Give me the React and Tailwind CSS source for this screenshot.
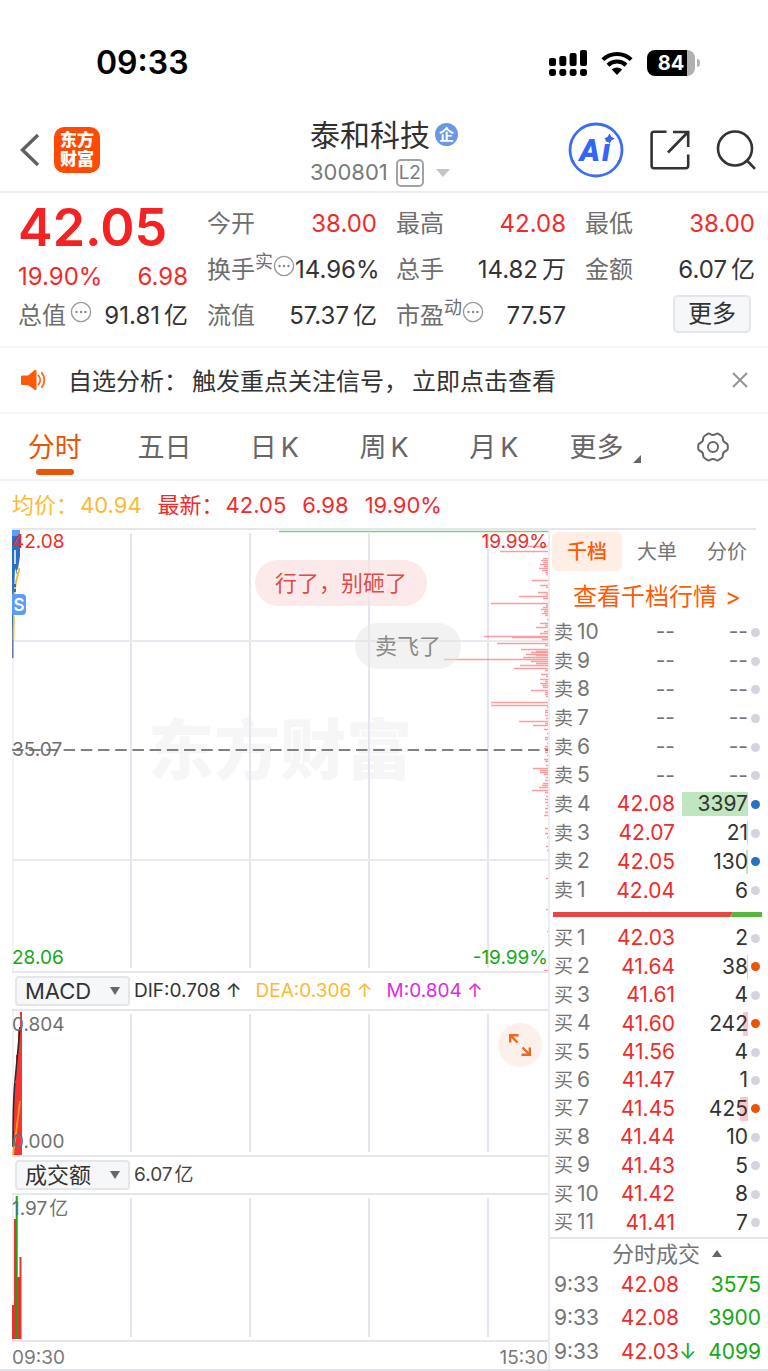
import React from "react";

const SELLS = [
  ["10", null, null, 0, "idle"],
  ["9", null, null, 0, "idle"],
  ["8", null, null, 0, "idle"],
  ["7", null, null, 0, "idle"],
  ["6", null, null, 0, "idle"],
  ["5", null, null, 0, "idle"],
  ["4", "42.08", "3397", 66, "sell"],
  ["3", "42.07", "21", 1, "idle"],
  ["2", "42.05", "130", 2, "sell"],
  ["1", "42.04", "6", 0, "idle"],
];

const BUYS = [
  ["1", "42.03", "2", 0, "idle"],
  ["2", "41.64", "38", 1, "buy"],
  ["3", "41.61", "4", 0, "idle"],
  ["4", "41.60", "242", 5, "buy"],
  ["5", "41.56", "4", 0, "idle"],
  ["6", "41.47", "1", 0, "idle"],
  ["7", "41.45", "425", 8, "buy"],
  ["8", "41.44", "10", 0, "idle"],
  ["9", "41.43", "5", 0, "idle"],
  ["10", "41.42", "8", 0, "idle"],
  ["11", "41.41", "7", 0, "idle"],
];

const TRADES = [
  ["9:33", "42.08", "", "3575"],
  ["9:33", "42.08", "", "3900"],
  ["9:33", "42.03", "↓", "4099"],
];

// Order density along the right edge of the price chart: [y, length].
const DENSITY = [
  [18, 20], [23, 48], [30, 5], [32, 7], [34, 5], [36, 8], [38, 4], [40, 9], [42, 6], [44, 3], [46, 2],
  [52, 16], [57, 8], [59, 2], [64, 10], [66, 2], [68, 29], [70, 5], [75, 57], [77, 2], [79, 5], [81, 7],
  [83, 4], [85, 6], [87, 3], [91, 1], [95, 8], [97, 3], [99, 12], [103, 4], [105, 8], [108, 64], [109, 36],
  [111, 6], [115, 51], [117, 3], [121, 27], [123, 12], [124, 17], [126, 22], [127, 12], [129, 25], [131, 104],
  [133, 17], [135, 12], [137, 28], [140, 34], [142, 3], [146, 7], [148, 2], [151, 8], [153, 3], [155, 8],
  [157, 6], [159, 5], [162, 17], [164, 3], [166, 3], [168, 2], [174, 57], [177, 57], [179, 1], [182, 3],
  [184, 3], [187, 3], [190, 2], [193, 29], [195, 3], [197, 15], [201, 4], [205, 1], [209, 3], [211, 3],
  [215, 1], [218, 3], [220, 4], [222, 3], [224, 3], [227, 1], [231, 4], [233, 3], [237, 2], [240, 15],
  [242, 8], [244, 8], [246, 4], [249, 2], [252, 3], [255, 5], [257, 6], [259, 9], [262, 16], [264, 3],
  [268, 2], [271, 3], [274, 3], [277, 1], [280, 3], [284, 3], [287, 4], [300, 3], [305, 3], [309, 1],
  [318, 2], [322, 1], [350, 2], [381, 2], [403, 1], [442, 4],
];

const DOT = { idle: "bg-[#d2d5dc]", sell: "bg-[#2a70c4]", buy: "bg-[#ea5504]" };

function More() {
  return (
    <svg viewBox="0 0 22 22" className="size-[22px] shrink-0" aria-hidden="true">
      <circle cx="11" cy="11" r="9.6" fill="none" stroke="#9a9a9a" strokeWidth="1.4" />
      <circle cx="6.5" cy="11" r="1.2" fill="#888" />
      <circle cx="11" cy="11" r="1.2" fill="#888" />
      <circle cx="15.5" cy="11" r="1.2" fill="#888" />
    </svg>
  );
}

function StatusBar() {
  return (
    <div className="flex h-[108px] items-center justify-between pt-[17px] pr-[68px] pl-24">
      <span className="text-[32px] leading-10 font-semibold text-black">09:33</span>
      <div className="flex items-center gap-3.5">
        <svg viewBox="0 0 38 26" className="h-[26px] w-[38px]" role="img" aria-label="信号">
          <g fill="#000">
            <rect x="0" y="8" width="7" height="8" rx="2" />
            <rect x="10.3" y="6" width="7" height="10" rx="2" />
            <rect x="20.6" y="3" width="7" height="13" rx="2" />
            <rect x="31" y="0" width="7" height="16" rx="2" />
            <rect x="0" y="19" width="7" height="7" rx="2.4" />
            <rect x="10.3" y="19" width="7" height="7" rx="2.4" />
            <rect x="20.6" y="19" width="7" height="7" rx="2.4" />
            <rect x="31" y="19" width="7" height="7" rx="2.4" />
          </g>
        </svg>
        <svg viewBox="0 0 32 24" className="h-6 w-8" role="img" aria-label="无线网络">
          <path d="M1.8 8.6a20.5 20.5 0 0 1 28.4 0" fill="none" stroke="#000" strokeWidth="4" />
          <path d="M7 14.2a13 13 0 0 1 18 0" fill="none" stroke="#000" strokeWidth="4" />
          <path d="M16 24l-5.2-5.4a7.6 7.6 0 0 1 10.4 0z" fill="#000" />
        </svg>
        <div className="flex items-center gap-0.5">
          <div className="flex h-[26px] w-12 items-center justify-center rounded-lg bg-linear-to-r from-black from-84% to-[#b0b0b0] to-84% text-xl font-bold text-white">
            84
          </div>
          <div className="h-2 w-[3px] rounded-r-full bg-[#b5b5b5]" />
        </div>
      </div>
    </div>
  );
}

function Header() {
  return (
    <header className="grid h-[85px] grid-cols-[1fr_auto_1fr] items-center border-b-2 border-[#ececee]">
      <div className="flex items-center gap-3.5 pl-5">
        <button aria-label="返回">
          <svg viewBox="0 0 20 34" className="h-[34px] w-5">
            <path d="M18 2L2.500 17L18 32" fill="none" stroke="#606060" strokeWidth="3.4" />
          </svg>
        </button>
        <div className="grid size-[46px] place-content-center rounded-[10px] bg-[#ff4a04] text-center text-[17px] leading-[19px] font-black text-white">
          <span>东方</span>
          <span>财富</span>
        </div>
      </div>
      <div className="flex flex-col self-end">
        <h1 className="flex h-[39px] items-center gap-[5px] text-[30px] leading-10 text-[#303030]">
          泰和科技
          <span className="grid size-[23px] place-content-center rounded-full bg-[#6c96e8] text-[15px] leading-none font-bold text-white">
            企
          </span>
        </h1>
        <button className="flex h-[37px] items-center gap-2 text-[22px] text-[#7a7a7a]">
          300801
          <span className="grid h-7 w-7 place-content-center rounded-[5px] border-2 border-[#a3a3a3] text-[19px] leading-none">
            L2
          </span>
          <svg viewBox="0 0 14 8" className="ml-1 h-2 w-3.5">
            <path d="M0 0H14L7 8z" fill="#c4c4c4" />
          </svg>
        </button>
      </div>
      <div className="flex items-center justify-end gap-[26px] pr-3">
        <button aria-label="Ai">
          <svg viewBox="0 0 56 56" className="size-14">
            <circle cx="28" cy="28" r="26" fill="none" stroke="#3a6cf8" strokeWidth="2.8" />
            <text x="11.500" y="38.500" fill="#3565f6" fontSize="31" fontWeight="900" fontStyle="italic" fontFamily="Roboto, sans-serif">
              A<tspan dx="2">i</tspan>
            </text>
            <path d="M41.500 11.500l1.900 3.300 3.300 1.900-3.300 1.900-1.900 3.300-1.900-3.300-3.300-1.900 3.300-1.900z" fill="#3565f6" />
          </svg>
        </button>
        <button aria-label="分享">
          <svg viewBox="0 0 40 40" className="size-10" fill="none" stroke="#333" strokeWidth="2.6">
            <path d="M16.5 1.8H4a2.4 2.4 0 0 0-2.4 2.4V36A2.4 2.4 0 0 0 4 38.200H35.800A2.400 2.400 0 0 0 38.200 36V24.500" />
            <path d="M23 2H38.200V17M38 2L18 22.500" />
          </svg>
        </button>
        <button aria-label="搜索">
          <svg viewBox="0 0 40 40" className="size-10" fill="none" stroke="#333" strokeWidth="2.600">
            <circle cx="19" cy="18.500" r="17" />
            <path d="M31 30.500L39 38.800" />
          </svg>
        </button>
      </div>
    </header>
  );
}

function Stat({ label, sup, more, value, unit, red }) {
  return (
    <div className="flex h-[46px] items-center justify-between whitespace-nowrap">
      <span className="flex items-center text-[#6e6e6e]">
        {label}
        {sup && <span className="-mt-4 text-lg leading-6">{sup}</span>}
        {more && (
          <span className="-mt-2">
            <More />
          </span>
        )}
      </span>
      <span className={red ? "text-[#f12b2b]" : "text-[#333]"}>
        {value}
        {unit && <span className="ml-1">{unit}</span>}
      </span>
    </div>
  );
}

function Quote() {
  return (
    <section className="grid grid-cols-4 gap-x-[19px] border-b-2 border-[#f5f5f7] pt-2 pr-[13px] pb-[7px] pl-[18px] text-2xl leading-8">
      <div>
        <div className="h-[54px] text-[52px] leading-[54px] font-semibold text-[#f42222]">42.05</div>
        <div className="flex h-[43px] items-center justify-between text-[#f12b2b]">
          <span>19.90%</span>
          <span>6.98</span>
        </div>
        <div className="flex h-9 items-center justify-between whitespace-nowrap">
          <span className="flex items-center gap-1 text-[#6e6e6e]">
            总值
            <span className="-mt-2">
              <More />
            </span>
          </span>
          <span className="text-[#333]">
            91.81<span className="ml-1">亿</span>
          </span>
        </div>
      </div>
      <div>
        <Stat label="今开" value="38.00" red />
        <Stat label="换手" sup="实" more value="14.96%" />
        <Stat label="流值" value="57.37" unit="亿" />
      </div>
      <div>
        <Stat label="最高" value="42.08" red />
        <Stat label="总手" value="14.82" unit="万" />
        <Stat label="市盈" sup="动" more value="77.57" />
      </div>
      <div>
        <Stat label="最低" value="38.00" red />
        <Stat label="金额" value="6.07" unit="亿" />
        <div className="flex justify-end pt-[2px] pr-1">
          <button className="h-[38px] w-[78px] rounded-[5px] border-2 border-[#e5e6ea] bg-[#f6f7f9] leading-none text-[#333]">
            更多
          </button>
        </div>
      </div>
    </section>
  );
}

function Notice() {
  return (
    <div className="flex h-[66px] items-center border-b-2 border-[#f5f5f7] pr-5 pl-[21px] text-2xl text-[#333]">
      <svg viewBox="0 0 26 22" className="mr-[21px] h-[22px] w-[26px]" aria-hidden="true">
        <path d="M1 6.500H7L13.500 1.300Q15.500 0 15.500 2.500V19.500Q15.500 22 13.500 20.700L7 16H1Q0 16 0 15V7.500Q0 6.500 1 6.500z" fill="#ff5a05" />
        <path d="M17.500 6.500a7 7 0 0 1 0 9M20.800 3.800a11.500 11.500 0 0 1 0 14.400" fill="none" stroke="#ff6a20" strokeWidth="1.900" strokeLinecap="round" />
      </svg>
      <a href="#signals" className="flex flex-1 gap-1 pt-1">
        <span>自选分析：</span>
        <span>触发重点关注信号，</span>
        <span>立即点击查看</span>
      </a>
      <button aria-label="关闭">
        <svg viewBox="0 0 16 16" className="size-4">
          <path d="M1 1L15 15M15 1L1 15" stroke="#949494" strokeWidth="2" />
        </svg>
      </button>
    </div>
  );
}

function Periods() {
  const item = "flex items-center justify-center pt-1 text-[#666]";
  return (
    <nav className="grid h-[67px] grid-cols-7 border-b-2 border-[#f3f3f5] text-[27px]">
      <button className="relative flex items-center justify-center pt-1 text-[#ea5504]">
        分时
        <span className="absolute bottom-1 h-1.5 w-[38px] rounded-full bg-[#ea5504]" />
      </button>
      <button className={item}>五日</button>
      {["日", "周", "月"].map((p) => (
        <button key={p} className="flex items-center justify-center gap-1 pt-1 text-[#666]">
          <span>{p}</span>
          <span>K</span>
        </button>
      ))}
      <button className="flex items-center justify-center gap-2.5 pt-1 pl-1 text-[#666]">
        更多
        <svg viewBox="0 0 8 8" className="mt-5 size-2">
          <path d="M8 0V8H0z" fill="#666" />
        </svg>
      </button>
      <button className="flex items-center justify-center" aria-label="设置">
        <svg viewBox="0 0 32 30" className="h-[30px] w-8" fill="none" stroke="#666" strokeWidth="2">
          <path
            strokeLinejoin="round"
            d="M10.200 2.200Q11.500 1 13 2Q16 4 19 2Q20.500 1 21.800 2.200L24.600 4Q26 5 25.800 6.800Q25.800 9.800 28.800 11Q30.800 12 30.800 13.500V16.500Q30.800 18 28.800 19Q25.800 20.200 25.800 23.200Q26 25 24.600 26L21.800 27.800Q20.500 29 19 28Q16 26 13 28Q11.500 29 10.200 27.800L7.400 26Q6 25 6.200 23.200Q6.200 20.200 3.200 19Q1.200 18 1.200 16.500V13.500Q1.200 12 3.200 11Q6.200 9.800 6.200 6.800Q6 5 7.400 4z"
          />
          <circle cx="16" cy="15" r="5" />
        </svg>
      </button>
    </nav>
  );
}

function Grid({ height }) {
  return (
    <g stroke="#e4e5ee" strokeWidth="2">
      <path d={`M1 0V${height}`} strokeWidth="1" />
      <path d={`M119 3V${height - 3}M238 3V${height - 3}M357 3V${height - 3}M476 3V${height - 3}`} />
    </g>
  );
}

function PriceChart() {
  return (
    <div className="relative border-y-2 border-[#e6e7ec] text-[19px] leading-6">
      <span className="absolute inset-x-0 top-[184px] text-center text-[66px] leading-[72px] font-black text-[#f6f6f6]">
        东方财富
      </span>
      <svg viewBox="0 0 536 441" preserveAspectRatio="none" className="relative block h-[441px] w-full" role="img" aria-label="分时走势">
        <Grid height={441} />
        <path d="M0 111H536M0 330H536" stroke="#e8e9f1" strokeWidth="2" />
        <path d="M267 1.500H536" stroke="#7fce80" strokeWidth="1.500" />
        <path d="M0 220H536" stroke="#808080" strokeWidth="2" strokeDasharray="11.500 5.700" />
        <path
          d={DENSITY.map(([y, w]) => `M536 ${y - 1.5}h${-w}`).join("")}
          stroke="#fb5a5f"
          strokeOpacity=".6"
          strokeWidth="1.300"
        />
        <path d="M.800 128V1H6" fill="none" stroke="#5b7f9e" strokeWidth="1.500" />
        <path d="M0 0H8V26L5 45L3 38L1.500 78L0 100z" fill="#2a70c4" />
        <path d="M3 20V34M5 42L7 38" stroke="#fff" strokeWidth="1.500" />
        <path d="M2 66L4 52L5 48L7.500 38" fill="none" stroke="#f8b62d" strokeWidth="1.800" />
        <path d="M1.500 110L2 86" fill="none" stroke="#f8b62d" strokeWidth="1.500" />
        <path d="M3 54V66" stroke="#2a70c4" strokeWidth="2" strokeDasharray="3 2" />
        <rect x="0" y="0" width="8" height="6" fill="#5c9cff" />
      </svg>
      <span className="absolute top-[64px] left-0 flex h-[21px] w-3.5 items-center justify-center rounded-r-[4px] bg-[#5c9cff] text-[17px] leading-5 font-semibold text-white">
        S
      </span>
      <span className="absolute top-0 left-0 text-[#f12b2b]">42.08</span>
      <span className="absolute top-0 right-0 text-[#f12b2b]">19.99%</span>
      <span className="absolute top-[208px] left-0 text-[#6e6e6e]">35.07</span>
      <span className="absolute bottom-px left-0 text-[#14a914]">28.06</span>
      <span className="absolute right-0 bottom-px text-[#14a914]">-19.99%</span>
      <span className="absolute top-[30px] left-[243px] flex h-[46px] items-center rounded-full bg-[#fbdede]/65 px-5 text-[22px] text-[#e04a4a]">
        行了，别砸了
      </span>
      <span className="absolute top-[93px] left-[343px] flex h-[46px] items-center rounded-full bg-[#e6e6e6]/50 px-5 text-[22px] text-[#8a8a8a]">
        卖飞了
      </span>
    </div>
  );
}

function Picker({ label, value, options }) {
  return (
    <span className="relative ml-[3px] flex items-center">
      <select
        aria-label={label}
        defaultValue={value}
        className="h-[30px] w-[115px] appearance-none rounded-[4px] border-2 border-[#e5e6ea] bg-[#f6f7f9] pl-2 text-[22px] leading-[26px] text-[#333]"
      >
        {options.map((o) => (
          <option key={o}>{o}</option>
        ))}
      </select>
      <svg viewBox="0 0 10 8" className="pointer-events-none absolute right-2.5 h-2 w-2.5" aria-hidden="true">
        <path d="M0 0H10L5 8z" fill="#666" />
      </svg>
    </span>
  );
}

function Charts() {
  return (
    <section className="flex min-w-0 flex-1 flex-col pl-3">
      <PriceChart />
      <div className="flex h-9 items-center text-[19px] whitespace-nowrap">
        <Picker label="指标" value="MACD" options={["MACD", "KDJ", "RSI"]} />
        <span className="ml-1 text-[#333]">DIF:0.708 ↑</span>
        <span className="ml-3.5 text-[#fbb936]">DEA:0.306 ↑</span>
        <span className="ml-3.5 text-[#e02ae0]">M:0.804 ↑</span>
      </div>
      <div className="relative border-y-2 border-[#e6e7ec] text-[19px] leading-6 text-[#707070]">
        <svg viewBox="0 0 536 144" preserveAspectRatio="none" className="block h-36 w-full" role="img" aria-label="MACD">
          <Grid height={144} />
          <path d="M1 144V120H2V72H4V44H6V18H8V1H10V144z" fill="#f93232" />
          <path d="M1 136Q1 90 3 70T8 16" fill="none" stroke="#2b2b2b" strokeWidth="1.600" />
          <path d="M1 144L4 122L8 90" fill="none" stroke="#f8a51d" strokeWidth="1.800" />
        </svg>
        <span className="absolute top-0.5 left-0">0.804</span>
        <span className="absolute bottom-px left-0">0.000</span>
        <button aria-label="展开" className="absolute top-3 right-1.5 grid size-11 place-content-center rounded-full bg-[#fdf0ea]">
          <svg viewBox="0 0 22 22" className="size-[22px]" fill="none" stroke="#ea6a20" strokeWidth="2.400">
            <path d="M1.200 8.500V1.200H9.500M1.200 1.200L8.500 8.500M20.800 13.500V20.800H12.500M20.800 20.800L13.500 13.500" />
          </svg>
        </button>
      </div>
      <div className="flex h-9 items-center text-[19px] text-[#444]">
        <Picker label="成交指标" value="成交额" options={["成交额", "成交量"]} />
        <span className="ml-1">
          6.07<span className="ml-0.5">亿</span>
        </span>
      </div>
      <div className="relative border-y-2 border-[#e6e7ec] text-[19px] leading-6 text-[#707070]">
        <svg viewBox="0 0 536 145" preserveAspectRatio="none" className="block h-[145px] w-full" role="img" aria-label="成交额">
          <Grid height={145} />
          <path d="M0 144V110H2V24H4V144zM5 144V82H7.500V62H9.500V144z" fill="#f02f2f" />
          <path d="M3.700 144V1H5.700V144z" fill="#14a914" />
        </svg>
        <span className="absolute top-0.5 left-0">
          1.97<span className="ml-0.5">亿</span>
        </span>
      </div>
      <div className="flex h-[27px] items-center justify-between pt-1 text-[19px] leading-6 text-[#7a7a7a]">
        <span>09:30</span>
        <span>15:30</span>
      </div>
    </section>
  );
}

function Book({ side, rows, className, bar }) {
  return (
    <table className={className}>
      <tbody>
        {rows.map(([level, price, qty, width, state]) => (
          <tr key={level}>
            <th scope="row" className="w-[52px] p-0 text-left font-normal whitespace-nowrap text-[#757575]">
              <span className="mr-1 text-[19px]">{side}</span>
              {level}
            </th>
            <td className={price ? "p-0 text-right text-[#f12b2b]" : "p-0 text-right text-[#757575]"}>{price || "--"}</td>
            <td className={qty ? "w-[73px] p-0 text-[#333]" : "w-[73px] p-0 text-[#757575]"}>
              <div className="relative text-right">
                <span className={bar} style={{ width }} />
                <span className="relative">{qty || "--"}</span>
              </div>
            </td>
            <td className="w-3 p-0">
              <div className={`ml-auto size-[9px] rounded-full ${DOT[state]}`} />
            </td>
          </tr>
        ))}
      </tbody>
    </table>
  );
}

function OrderPanel() {
  return (
    <aside className="w-[220px] shrink-0 border-l-2 border-[#ececf1] text-[21px] leading-6">
      <div className="mr-3 border-t-2 border-[#e6e7ec]" />
      <div className="grid h-[41px] grid-cols-3 pt-[2px] pr-1.5 pl-0.5 text-xl">
        <button className="rounded-md bg-[#feeee5] font-medium text-[#ff5a05]">千档</button>
        <button className="text-[#757575]">大单</button>
        <button className="text-[#757575]">分价</button>
      </div>
      <a href="#depth" className="flex h-[47px] items-center justify-center gap-2 pt-1 pr-1 text-2xl text-[#ff5a05]">
        <span>查看千档行情</span>
        <span>&gt;</span>
      </a>
      <div className="pr-2 pl-1">
        <Book
          side="卖"
          rows={SELLS}
          className="h-[287px] w-full table-fixed"
          bar="absolute inset-y-0 right-0 bg-[#bfe6bf]"
        />
      </div>
      <svg viewBox="0 0 209 5" preserveAspectRatio="none" className="mt-[7px] mb-[7px] ml-[3px] block h-[5px] w-[209px]" role="img" aria-label="买卖比例">
        <path d="M0 0H180L177 5H0z" fill="#e94545" />
        <path d="M180 0H209V5H177z" fill="#55b83d" />
      </svg>
      <div className="border-b-2 border-[#e4e5ee] pr-2 pl-1">
        <Book
          side="买"
          rows={BUYS}
          className="h-[313px] w-full table-fixed"
          bar="absolute inset-y-0 right-0 bg-[#fcc5c8]"
        />
      </div>
      <button className="flex h-[29px] w-full items-center justify-center gap-3 pl-4 text-[22px] text-[#757575]">
        分时成交
        <svg viewBox="0 0 10 7" className="h-[7px] w-2.5" aria-hidden="true">
          <path d="M0 7H10L5 0z" fill="#666" />
        </svg>
      </button>
      <table className="h-[101px] w-full table-fixed">
        <tbody>
          {TRADES.map(([time, price, arrow, qty], i) => (
            <tr key={i}>
              <td className="w-[60px] p-0 pl-1 text-[#757575]">{time}</td>
              <td className="w-[69px] p-0 text-right text-[#f12b2b]">{price}</td>
              <td className="w-4 p-0 text-[#14a914]">{arrow}</td>
              <td className="p-0 pr-[7px] text-right text-[#14a914]">{qty}</td>
            </tr>
          ))}
        </tbody>
      </table>
    </aside>
  );
}

export default function App() {
  return (
    <main lang="zh-CN" className="bg-white font-['Inter','Noto_Sans_CJK_SC',sans-serif]">
      <StatusBar />
      <Header />
      <Quote />
      <Notice />
      <Periods />
      <div className="flex h-[47px] items-center gap-4 pt-0.5 pl-3 text-[22px] text-[#f12b2b]">
        <span className="text-[#fbb936]">
          均价：<span className="ml-0.5">40.94</span>
        </span>
        <span>
          最新：<span className="ml-0.5">42.05</span>
        </span>
        <span>6.98</span>
        <span>19.90%</span>
      </div>
      <div className="flex border-b-2 border-[#e4e5ea]">
        <Charts />
        <OrderPanel />
      </div>
    </main>
  );
}
